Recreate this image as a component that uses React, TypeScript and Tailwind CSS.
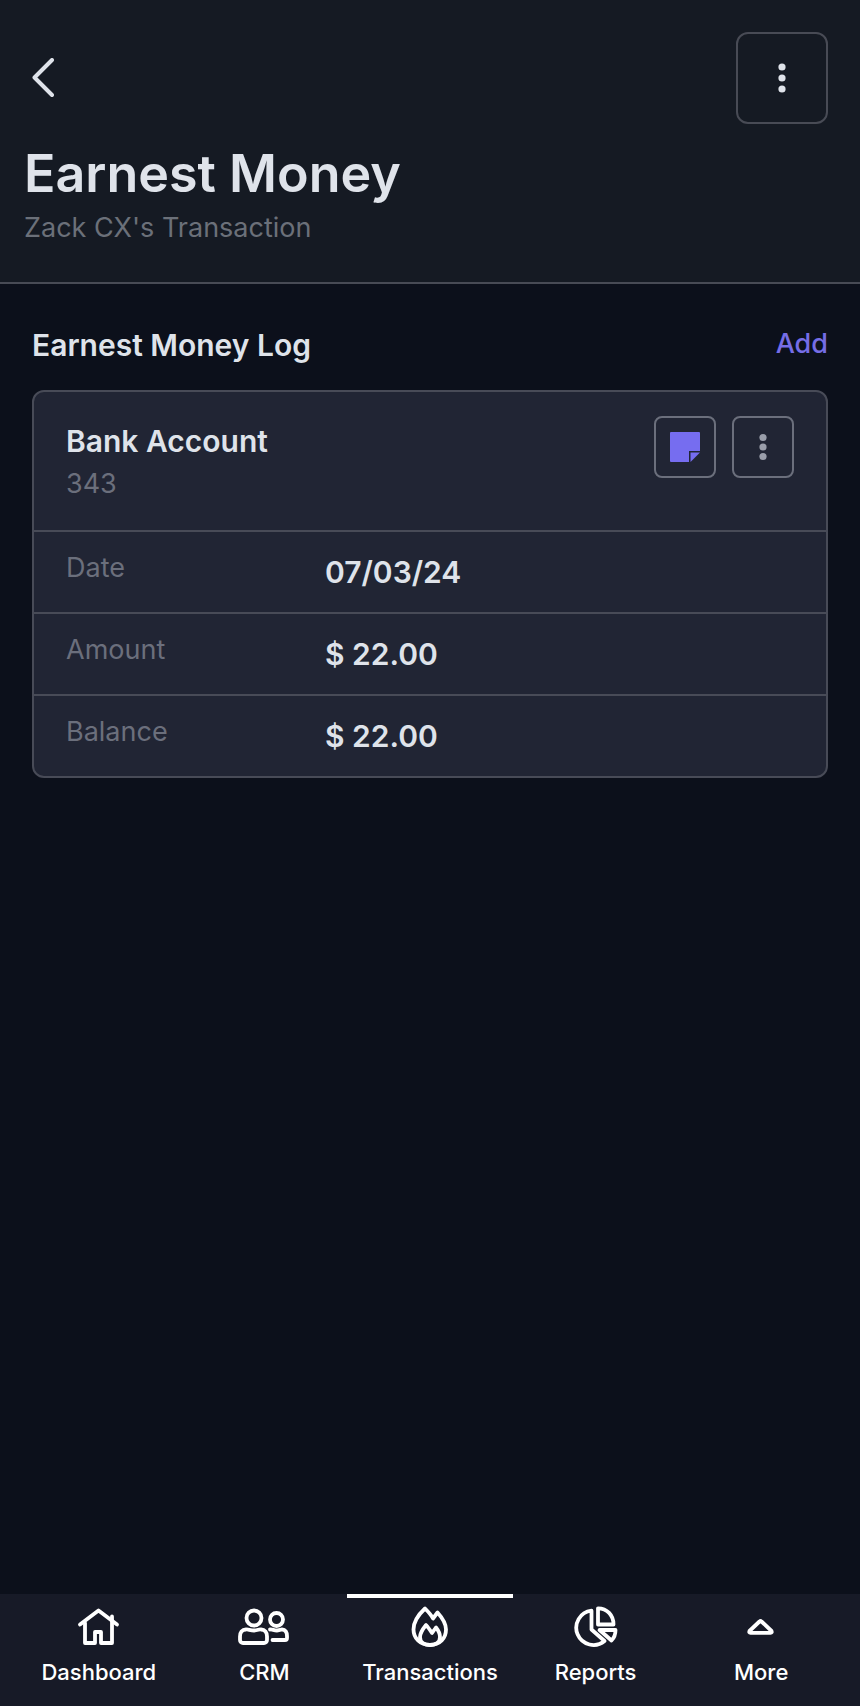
import type { ReactNode } from "react";

interface NavItem {
  label: string;
  active?: boolean;
  icon: ReactNode;
}

const rows = [
  { label: "Date", value: "07/03/24" },
  { label: "Amount", value: "$ 22.00" },
  { label: "Balance", value: "$ 22.00" },
];

const navItems: NavItem[] = [
  {
    label: "Dashboard",
    icon: (
      <>
        <path d="M9 18.500 27.500 4.500 46 18.500" />
        <path d="M14 17v20h10V26h6v11h11V10.500" />
      </>
    ),
  },
  {
    label: "CRM",
    icon: (
      <>
        <circle cx="18" cy="12" r="7.500" />
        <path d="M10 23.500c2-.6 4 1 8 1s5-1.600 7-1c4 0 6 3 6 7V34a3 3 0 0 1-3 3H7a3 3 0 0 1-3-3v-3.500c0-4 2-7 6-7Z" />
        <circle cx="40.500" cy="13.500" r="6.500" />
        <path d="M34 23.500c2.500-.4 3.500 1 7 1s3.500-1 5-1c3.500 0 5 3 5 6.500V32a2 2 0 0 1-2 2H36.500" />
      </>
    ),
  },
  {
    label: "Transactions",
    active: true,
    icon: (
      <>
        <path d="M23 2.500C16 9 11.500 17 11.500 23.500 11.500 32 18 39 28 39s16-7 16-15.500c0-6-4-12-8.500-17l-4.500 6c-2-4-5-7-8-10Z" />
        <path d="M24 19c-4 5-6 8-6 12 0 5 4 8 10 8s10-3 10-8c0-4-2-7-4-9.500l-4 5.500c-2-3-4-6-6-8Z" />
      </>
    ),
  },
  {
    label: "Reports",
    icon: (
      <>
        <path d="M23.500 4.700A17.200 17.200 0 1 0 36.500 35L23.500 23.500Z" />
        <path d="M30 2.300v16.200h15.500C45.500 9 39 2.300 30 2.300Z" />
        <path d="M31.500 24H47.500c0 4-1.500 8-4 10.500Z" />
      </>
    ),
  },
  {
    label: "More",
    icon: <path d="M26.500 15.500q1-1 2 0L38.500 25q.8 1.800-1 1.800h-20q-1.800 0-1-1.800Z" />,
  },
];

function Dots({ className, gap }: { className: string; gap: number }) {
  return (
    <svg width="8" height="32" viewBox="0 0 8 32" fill="currentColor" className={className} aria-hidden="true">
      <circle cx="4" cy={16 - gap} r="3.6" />
      <circle cx="4" cy="16" r="3.6" />
      <circle cx="4" cy={16 + gap} r="3.6" />
    </svg>
  );
}

function Header() {
  return (
    <header className="border-b-2 border-[#484b55] bg-[#151a23] px-6 pt-8 pb-[34px]">
      <div className="flex items-center justify-between pr-2">
        <button type="button" aria-label="Back" className="flex h-12 w-9 items-center pl-2">
          <svg width="22" height="40" viewBox="0 0 22 40" fill="none" stroke="currentColor" strokeWidth="4" strokeLinecap="round" strokeLinejoin="round">
            <path d="M20 2 2.500 19.500 20 37" />
          </svg>
        </button>
        <button
          type="button"
          aria-label="Page options"
          className="flex size-[92px] items-center justify-center rounded-xl border-2 border-[#484b55]"
        >
          <Dots gap={11} className="text-[#dfe3ea]" />
        </button>
      </div>
      <h1 className="mt-5 text-[52px] leading-[60px] font-semibold">Earnest Money</h1>
      <p className="mt-1 text-[27px] leading-10 text-[#6b7079]">Zack CX's Transaction</p>
    </header>
  );
}

function AccountCard() {
  return (
    <article className="mt-6 rounded-xl border-2 border-[#484b57] bg-[#212534]">
      <div className="flex items-start justify-between px-8 pt-6 pb-[26px]">
        <div className="pt-1">
          <h3 className="text-[30px] leading-[42px] font-semibold">Bank Account</h3>
          <p className="mt-[2px] text-[27px] leading-10 text-[#6b6f7c]">343</p>
        </div>
        <div className="flex gap-4">
          <button
            type="button"
            aria-label="Notes"
            className="flex size-[62px] items-center justify-center rounded-lg border-2 border-[#6b6f7c]"
          >
            <svg width="30" height="30" viewBox="0 0 30 30" fill="#766df0" aria-hidden="true">
              <path d="M1 0h28a1 1 0 0 1 1 1v18H19v11H1a1 1 0 0 1-1-1V1a1 1 0 0 1 1-1Z" />
              <path d="M20.500 20.500H30L20.500 30Z" />
            </svg>
          </button>
          <button
            type="button"
            aria-label="Account options"
            className="flex size-[62px] items-center justify-center rounded-lg border-2 border-[#6b6f7c]"
          >
            <Dots gap={9.5} className="text-[#9a9eaa]" />
          </button>
        </div>
      </div>
      <dl>
        {rows.map((row) => (
          <div key={row.label} className="flex border-t-2 border-[#484b57] px-8 pt-4 pb-5">
            <dt className="w-[259px] shrink-0 text-[27px] leading-10 text-[#6b6f7c]">{row.label}</dt>
            <dd className="pt-1 text-[30px] leading-10 font-semibold">{row.value}</dd>
          </div>
        ))}
      </dl>
    </article>
  );
}

function BottomNav() {
  return (
    <nav className="flex bg-[#171a27] px-4 text-white">
      {navItems.map((item) => (
        <a
          key={item.label}
          href="#"
          aria-current={item.active ? "page" : undefined}
          className={`flex flex-1 basis-0 flex-col items-center border-t-4 pt-2 pb-[18px] ${
            item.active ? "border-white" : "border-transparent"
          }`}
        >
          <svg width="56" height="42" viewBox="0 0 56 42" fill="none" stroke="currentColor" strokeWidth="3.800" strokeLinecap="round" strokeLinejoin="round" aria-hidden="true">
            {item.icon}
          </svg>
          <span className="mt-2 text-[22px] leading-8 font-medium">{item.label}</span>
        </a>
      ))}
    </nav>
  );
}

export default function App() {
  return (
    <div className="flex min-h-screen flex-col bg-[#0c101b] font-['Inter',sans-serif] text-[#dfe3ea]">
      <Header />
      <main className="flex-1 px-8 pt-10">
        <div className="flex items-start justify-between">
          <h2 className="text-[30px] leading-[42px] font-semibold">Earnest Money Log</h2>
          <button type="button" className="text-[27px] leading-10 font-medium text-[#766de6]">
            Add
          </button>
        </div>
        <AccountCard />
      </main>
      <BottomNav />
    </div>
  );
}
